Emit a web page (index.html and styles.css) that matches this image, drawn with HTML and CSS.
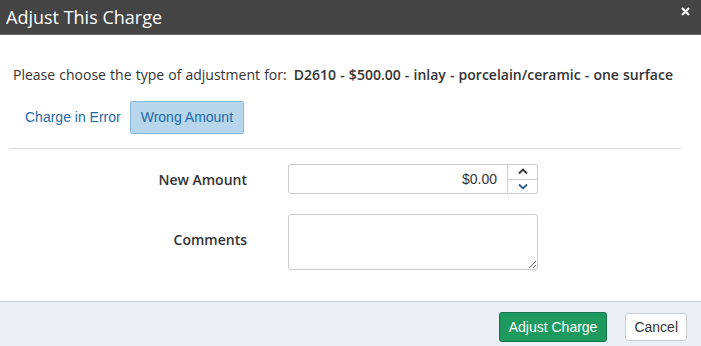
FILE: index.html
```html
<!DOCTYPE html>
<html lang="en">
<head>
  <meta charset="UTF-8" />
  <title>Adjust This Charge</title>
  <link rel="stylesheet" href="styles.css">
</head>
<body>
  <div class="modal">
    <div class="modal-header">
      <h2>Adjust This Charge</h2>
      <span class="close"><svg width="9" height="9" viewBox="0 0 9 9"><path d="M1 1 L8 8 M8 1 L1 8" stroke="#fff" stroke-width="2.2"/></svg></span>
    </div>
    <div class="modal-body">
      <p class="intro">Please choose the type of adjustment for: <strong>D2610 - $500.00 - inlay - porcelain/ceramic - one surface</strong></p>
      <div class="tabs">
        <a class="tab" href="#">Charge in Error</a>
        <a class="tab active" href="#">Wrong Amount</a>
      </div>
      <hr>
      <div class="form-row">
        <label for="amount">New Amount</label>
        <div class="spinner">
          <input type="text" id="amount" value="$0.00">
          <div class="spin-btns">
            <span class="up"><svg width="10" height="7" viewBox="0 0 10 7"><path d="M1 5.5 L5 1.5 L9 5.5" fill="none" stroke="#333" stroke-width="1.8"/></svg></span>
            <span class="down"><svg width="10" height="7" viewBox="0 0 10 7"><path d="M1 1.5 L5 5.5 L9 1.5" fill="none" stroke="#2e5d8a" stroke-width="1.8"/></svg></span>
          </div>
        </div>
      </div>
      <div class="form-row">
        <label for="comments">Comments</label>
        <textarea id="comments"></textarea>
      </div>
    </div>
    <div class="modal-footer">
      <button type="button" class="btn btn-success">Adjust Charge</button>
      <button type="button" class="btn btn-default">Cancel</button>
    </div>
  </div>
</body>
</html>
```

FILE: styles.css
```css
body {
  margin: 0;
  font-family: "Open Sans", sans-serif;
  color: #333;
  background: #fff;
}
.modal {
  width: 701px;
  height: 346px;
  display: flex;
  flex-direction: column;
}
.modal-header {
  height: 34px;
  flex-shrink: 0;
  background: #444;
  border-bottom: 1px solid #6a6a6a;
  display: flex;
  align-items: center;
  justify-content: space-between;
  padding: 0 11px 0 6px;
}
.modal-header h2 {
  margin: 0;
  font-size: 18px;
  font-weight: 400;
  color: #fff;
}
.close {
  display: flex;
  align-self: flex-start;
  margin-top: 7px;
}
.modal-body {
  flex: 1;
  padding: 0 20px 0 9px;
}
.intro {
  margin: 30px 0 0 4px;
  font-size: 14px;
  line-height: 20px;
  word-spacing: 0.5px;
}
.intro strong {
  font-weight: 600;
  margin-left: 3px;
}
.tabs {
  display: flex;
  align-items: center;
  gap: 0;
  margin-top: 16px;
  padding-left: 7px;
}
.tab {
  font-family: "Liberation Sans", Arial, sans-serif;
  font-size: 14px;
  line-height: 17px;
  color: #1e6aa8;
  text-decoration: none;
  padding: 7px 8px;
  border: 1px solid transparent;
  border-radius: 2px;
}
.tab.active {
  background: #b7d6ec;
  border-color: #86b9de;
  padding: 7px 10px;
}
hr {
  border: 0;
  border-top: 1px solid #ddd;
  margin: 14px 0 0;
}
.form-row {
  display: flex;
  align-items: center;
  margin-top: 15px;
}
.form-row label {
  width: 238px;
  text-align: right;
  font-size: 14px;
  font-weight: 600;
  margin-right: 41px;
}
.spinner {
  display: flex;
  width: 250px;
  height: 30px;
}
.spinner input {
  flex: 1;
  min-width: 0;
  box-sizing: border-box;
  height: 30px;
  border: 1px solid #ccc;
  border-radius: 3px 0 0 3px;
  text-align: right;
  padding: 0 10px;
  font-family: "Liberation Sans", Arial, sans-serif;
  font-size: 14px;
  color: #333;
}
.spin-btns {
  width: 30px;
  display: flex;
  flex-direction: column;
  border: 1px solid #ccc;
  border-left: 0;
  border-radius: 0 3px 3px 0;
  box-sizing: border-box;
}
.spin-btns span {
  flex: 1;
  display: flex;
  align-items: center;
  justify-content: center;
}
.spin-btns .up {
  border-bottom: 1px solid #ccc;
}
textarea {
  width: 250px;
  height: 56px;
  box-sizing: border-box;
  border: 1px solid #ccc;
  border-radius: 3px;
  resize: both;
  margin-top: 5px;
}
.modal-footer {
  height: 45px;
  flex-shrink: 0;
  box-sizing: border-box;
  background: #ebf0f4;
  border-top: 1px solid #ccd1d6;
  display: flex;
  align-items: center;
  justify-content: flex-end;
  gap: 18px;
  padding: 5px 14px 0;
}
.btn {
  font-family: "Liberation Sans", Arial, sans-serif;
  font-size: 14px;
  border-radius: 3px;
  cursor: pointer;
}
.btn-success {
  background: #1e9a5e;
  border: 1px solid #157447;
  color: #fff;
  height: 30px;
  padding: 0 9px;
}
.btn-default {
  background: #fff;
  border: 1px solid #ccc;
  color: #333;
  height: 28px;
  padding: 0 8px;
}
```
